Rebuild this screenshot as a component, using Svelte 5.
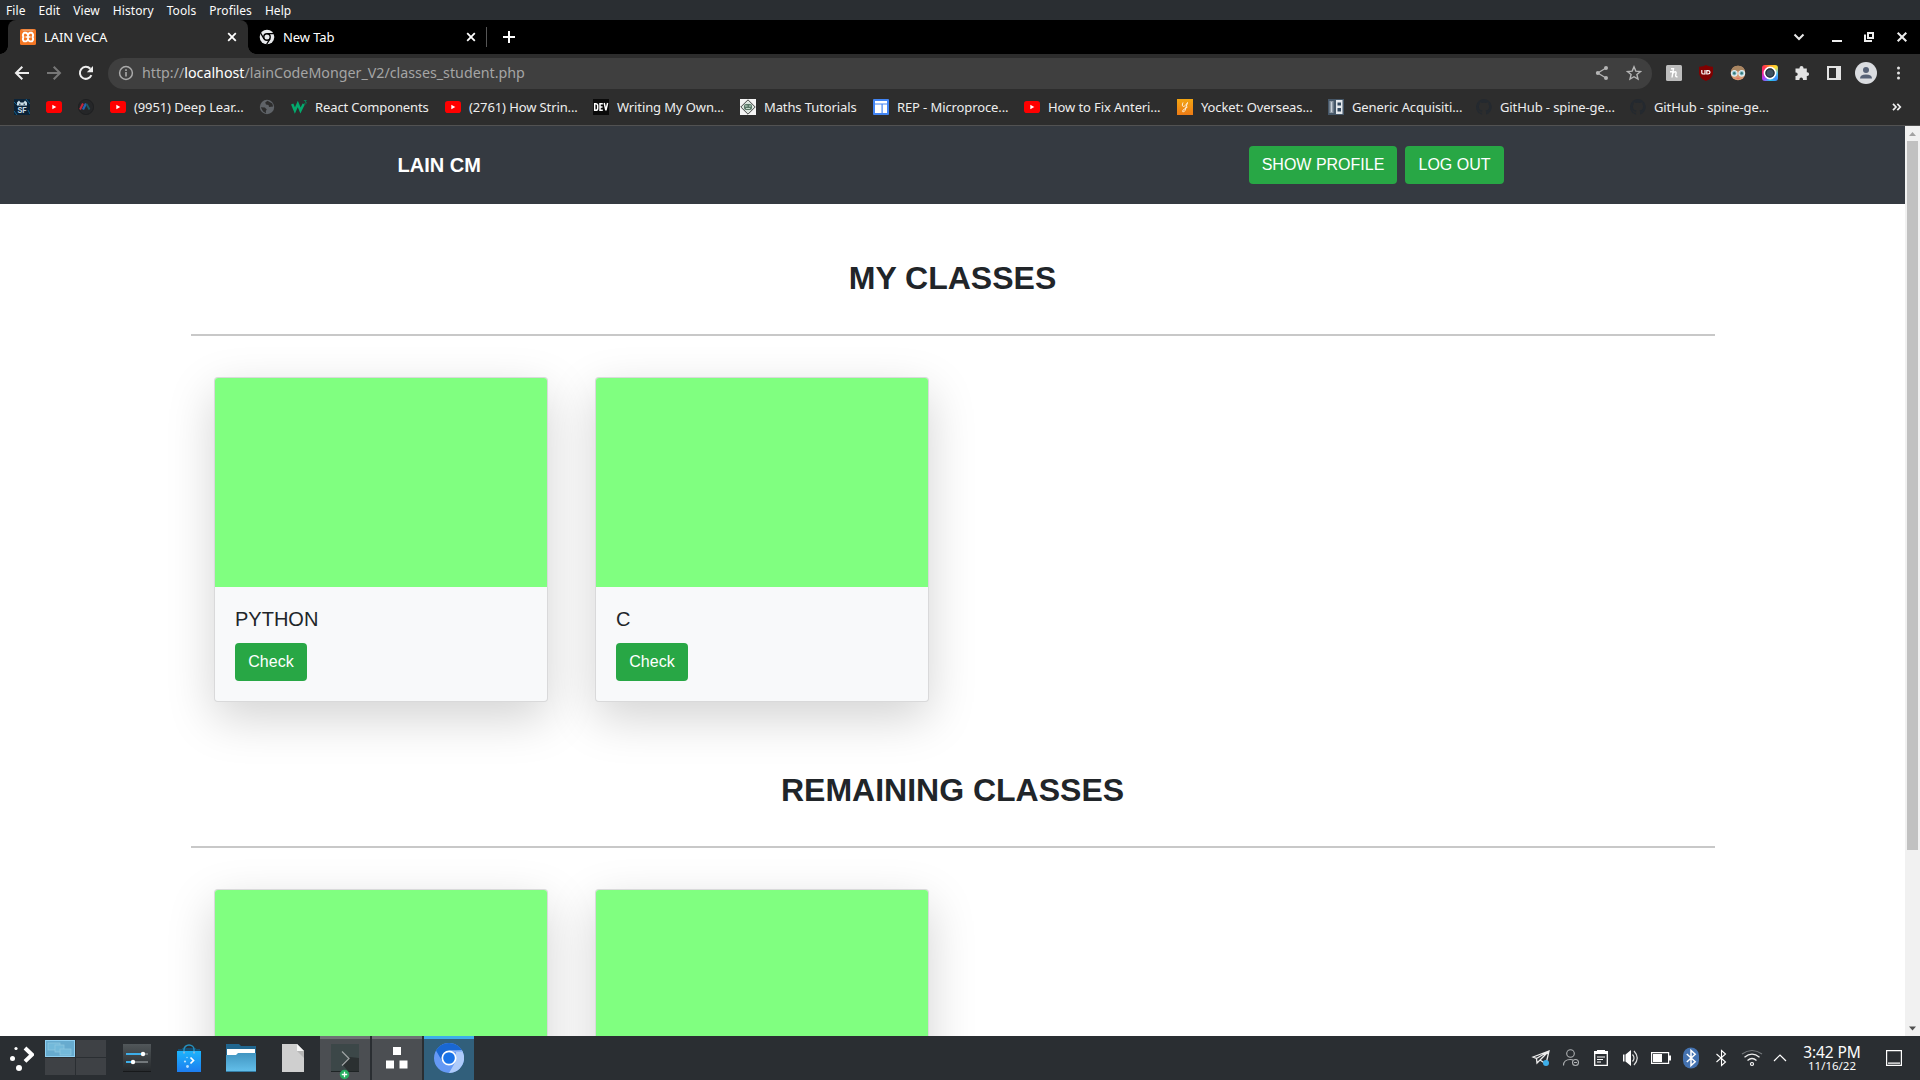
<script>
  const menus = ['File', 'Edit', 'View', 'History', 'Tools', 'Profiles', 'Help'];

  const bookmarks = [
    { icon: 'sf', text: '', width: 32 },
    { icon: 'youtube', text: '', width: 32 },
    { icon: 'stripes', text: '', width: 32 },
    { icon: 'youtube', text: '(9951) Deep Lear...', width: 149 },
    { icon: 'globe', text: '', width: 32 },
    { icon: 'w3', text: 'React Components', width: 154 },
    { icon: 'youtube', text: '(2761) How Strin...', width: 148 },
    { icon: 'dev', text: 'Writing My Own...', width: 147 },
    { icon: 'maths', text: 'Maths Tutorials', width: 133 },
    { icon: 'rep', text: 'REP - Microproce...', width: 151 },
    { icon: 'youtube', text: 'How to Fix Anteri...', width: 153 },
    { icon: 'yocket', text: 'Yocket: Overseas...', width: 151 },
    { icon: 'generic', text: 'Generic Acquisiti...', width: 148 },
    { icon: 'github', text: 'GitHub - spine-ge...', width: 154 },
    { icon: 'github', text: 'GitHub - spine-ge...', width: 154 }
  ];

  // Cards without a name show only their cover.
  const sections = [
    { title: 'MY CLASSES', cards: ['PYTHON', 'C'] },
    { title: 'REMAINING CLASSES', cards: ['', ''] }
  ];
</script>

{#snippet favicon(name)}
  <svg class="fav" viewBox="0 0 16 16" width="16" height="16">
    {#if name === 'sf'}
      <rect width="16" height="16" fill="#0b2338" />
      <path d="M0 3l3 3M12 0l4 5M0 12l3 4M14 11l2 4" stroke="#16608a" stroke-width="1" />
      <path d="M3 6.500V3.500L5 1.500l1.500 2h3l1.500-2 2 2v3z" fill="#c9dce6" />
      <path d="M5 5.200h1.500M9.500 5.200H11" stroke="#0b2338" />
      <text x="8" y="14" text-anchor="middle" font-family="Inter" font-weight="700" font-size="7.500" fill="#c9dce6">SF</text>
    {:else if name === 'youtube'}
      <rect y="2" width="16" height="12" rx="2.800" fill="#f00" />
      <path d="M6.300 5.700v4.600l4-2.300z" fill="#fff" />
    {:else if name === 'stripes'}
      <circle cx="8" cy="8" r="7.600" fill="#252628" stroke="#1f2022" />
      <path d="M2 10.500L5 4.500" stroke="#c6283a" stroke-width="2" />
      <path d="M5 10.500L8 4.500" stroke="#2464b4" stroke-width="2.200" />
      <path d="M8.500 5l3 5.500" stroke="#1c5b67" stroke-width="1.800" />
    {:else if name === 'globe'}
      <circle cx="8" cy="8" r="7.200" fill="#5f6368" />
      <path d="M8.500 1.800L6.200 3.500 7 5.500l2.500.6.600 2 4-.5-.8-3.200zM1.800 8.300l4 .2 2 2-1 1.500.3 2.200-3-1.700z" fill="#2d2d2d" />
    {:else if name === 'w3'}
      <path d="M1.200 5l2.700 6.500L6.800 5l2.700 6.500L12.700 5" fill="none" stroke="#04aa6d" stroke-width="2.500" />
      <path d="M12.800 1.500h2.500l-1.300 1.500q1.700 0 1.400 1.200-.6 1.200-2.500.5" fill="none" stroke="#07865a" stroke-width=".9" />
    {:else if name === 'dev'}
      <rect width="16" height="16" fill="#0a0a0a" />
      <g fill="none" stroke="#fff" stroke-width="1.500">
        <path d="M1.700 4.700v6.600h1q2 0 2-1.800v-3q0-1.800-2-1.800z" />
        <path d="M9.800 4.700H7v6.600h2.800M7 8h2.500" />
        <path d="M11.200 4l1.700 7.300L14.600 4" />
      </g>
    {:else if name === 'maths'}
      <rect width="16" height="16" fill="#f5f5f5" />
      <path d="M8 .8L15.200 8 8 15.200.8 8z" fill="#dce5df" stroke="#333" stroke-width=".9" />
      <rect x="4" y="5" width="8" height="6" rx="2" fill="#5b7869" />
      <path d="M5 7h2.500M9 7h2M6 9.500h4" stroke="#c5dacb" />
    {:else if name === 'rep'}
      <rect width="16" height="16" rx="1" fill="#4285f4" />
      <path d="M2 2h12v2.400H2zM2 5.600h6.500V14H2zM9.700 5.600H14V14H9.700z" fill="#fff" />
    {:else if name === 'yocket'}
      <defs><linearGradient id="yk" x2="0" y2="1"><stop stop-color="#f3a512" /><stop offset="1" stop-color="#ed7b15" /></linearGradient></defs>
      <rect width="16" height="16" fill="url(#yk)" />
      <path d="M6 3.500C4 8 7 9.500 10.500 3.500L8 11.500Q6 14.500 5.500 12q1-2 5-4" fill="none" stroke="#fff2dc" stroke-width="1" />
    {:else if name === 'generic'}
      <rect width="16" height="16" fill="#465768" />
      <path d="M1.500 2h4v12h-4z" fill="#8f9aa5" />
      <path d="M8 1h6.500v14H8z" fill="#e4e8ec" />
      <path d="M9.500 3.500h3.500v3H9.500zM9.500 9h3.500v3.500H9.500z" fill="#34495e" />
      <path d="M3.500 3v10" stroke="#c9d1d9" />
    {:else if name === 'github'}
      <path fill="#24292f" d="M8 0a8 8 0 00-2.530 15.590c.4.070.55-.17.550-.38v-1.490c-2.230.49-2.690-1.070-2.690-1.070-.36-.93-.89-1.170-.89-1.170-.73-.5.050-.49.050-.49.810.06 1.230.83 1.230.83.72 1.230 1.880.88 2.340.67.070-.52.280-.88.510-1.080-1.780-.2-3.640-.89-3.640-3.950 0-.87.310-1.590.82-2.150-.08-.2-.36-1.020.08-2.120 0 0 .67-.21 2.200.82a7.700 7.700 0 014 0c1.530-1.040 2.200-.82 2.200-.82.44 1.100.16 1.920.08 2.120.51.56.82 1.270.82 2.150 0 3.070-1.870 3.750-3.650 3.950.29.250.54.73.54 1.480v2.200c0 .21.150.46.550.38A8 8 0 008 0z" />
    {:else if name === 'xampp'}
      <rect width="16" height="16" rx="1.500" fill="#f37623" />
      <path d="M2.500 1.200h11" stroke="#d9d3c8" stroke-width=".6" />
      <g fill="none" stroke="#fff" stroke-width="1.900" stroke-linejoin="round">
        <path d="M4 3.800h2Q7 4 8 5.800 9 4 10 3.800h2q2 2 .5 4.200 1.500 2.500-.5 4.400h-2Q8.500 12 8 10.300 7.500 12 6 12.400H4Q2 10.500 3.500 8 2 5.800 4 3.800z" />
      </g>
      <path d="M5.500 8h5M8 6v4" stroke="#fff" stroke-width="1.500" />
    {:else if name === 'chrome'}
      <circle cx="8" cy="8" r="7.300" fill="#e8eaed" />
      <circle cx="8" cy="8" r="3.200" fill="#e8eaed" stroke="#000" stroke-width="1.400" />
      <path d="M8 4.600h7M5 9.800L1.600 4M11 9.800L7.500 15.500" stroke="#000" stroke-width="1.300" />
    {/if}
  </svg>
{/snippet}

<div class="desktop">
  <nav class="menubar">
    {#each menus as m}<span>{m}</span>{/each}
  </nav>

  <div class="tabs">
    <div class="tab active">
      {@render favicon('xampp')}
      <span class="tab-title">LAIN VeCA</span>
      <svg width="16" height="16" viewBox="0 0 16 16"><path d="M4.200 4.200l7.600 7.600M11.800 4.200l-7.600 7.600" stroke="#fff" stroke-width="1.800" /></svg>
    </div>
    <div class="tab idle">
      {@render favicon('chrome')}
      <span class="tab-title">New Tab</span>
      <svg width="16" height="16" viewBox="0 0 16 16"><path d="M4.200 4.200l7.600 7.600M11.800 4.200l-7.600 7.600" stroke="#fff" stroke-width="1.800" /></svg>
    </div>
    <i class="tab-sep"></i>
    <svg class="plus" width="14" height="14" viewBox="0 0 14 14"><path d="M7 1v12M1 7h12" stroke="#fff" stroke-width="2" /></svg>
    <div class="win">
      <svg width="16" height="16" viewBox="0 0 16 16"><path d="M3.500 5.500L8 10l4.500-4.500" fill="none" stroke="#e8e8e8" stroke-width="2" /></svg>
      <svg width="16" height="16" viewBox="0 0 16 16"><path d="M3 12h10" stroke="#eee" stroke-width="2" /></svg>
      <svg width="16" height="16" viewBox="0 0 16 16"><path d="M7 4h5v5H7zM4 5.500V12h7" fill="none" stroke="#eee" stroke-width="2" /></svg>
      <svg width="16" height="16" viewBox="0 0 16 16"><path d="M3.700 3.700l8.600 8.600M12.300 3.700l-8.600 8.600" stroke="#eee" stroke-width="2" /></svg>
    </div>
  </div>

  <div class="toolbar">
    <div class="navs">
      <svg width="16" height="16" viewBox="0 0 16 16"><path d="M15 8H2.500M8.300 1.700L2 8l6.300 6.300" fill="none" stroke="#eee" stroke-width="2" /></svg>
      <svg width="16" height="16" viewBox="0 0 16 16"><path d="M1 8h12.500M7.700 1.700L14 8l-6.300 6.300" fill="none" stroke="#777" stroke-width="2" /></svg>
      <svg width="16" height="16" viewBox="0 0 16 16"><path d="M13.400 10.200A6 6 0 1112.300 3.800" fill="none" stroke="#eee" stroke-width="2" /><path d="M15 1v6.200H8.800z" fill="#eee" /></svg>
    </div>
    <div class="omnibox">
      <svg width="16" height="16" viewBox="0 0 16 16"><circle cx="8" cy="8" r="6.400" fill="none" stroke="#aaa" stroke-width="1.500" /><path d="M8 7v4.500M8 4.300v1.700" stroke="#aaa" stroke-width="1.600" /></svg>
      <span class="url">http://<b>localhost</b>/lainCodeMonger_V2/classes_student.php</span>
      <svg width="16" height="16" viewBox="0 0 16 16"><path d="M12 3L3.800 8l8.200 5" fill="none" stroke="#b5b5b5" stroke-width="1.300" /><g fill="#b5b5b5"><circle cx="12" cy="3" r="2" /><circle cx="3.800" cy="8" r="2" /><circle cx="12" cy="13" r="2" /></g></svg>
      <svg width="16" height="16" viewBox="0 0 16 16"><path d="M8 1.800l1.800 4.300 4.700.4-3.600 3 1.100 4.600L8 11.700l-4 2.400 1.100-4.600-3.600-3 4.700-.4z" fill="none" stroke="#b5b5b5" stroke-width="1.400" /></svg>
    </div>
    <div class="exts">
      <svg width="16" height="16" viewBox="0 0 16 16"><rect width="16" height="16" rx="1.500" fill="#bdbdbd" /><path d="M5 3.700h2.500L6 12.500M6.300 9.500q1-2.700 2.800-2.700 1.400 0 .8 2.200-.9 3.300 1.600 2.700M4 6.700h3" fill="none" stroke="#fff" stroke-width="1.400" /></svg>
      <svg width="16" height="16" viewBox="0 0 16 16"><path d="M8 0q3 2 7 1.800V8q0 5-7 8-7-3-7-8V1.800Q5 2 8 0z" fill="#800000" /><path d="M3.800 5v2.700q0 1.300 1.500 1.300H7V5M8.800 5.600h1.200q2 0 2 1.700t-2 1.700H8.800z" fill="none" stroke="#fff" stroke-width="1.200" /></svg>
      <svg width="16" height="16" viewBox="0 0 16 16"><circle cx="8" cy="8" r="7.300" fill="#d99a72" /><path d="M1 6Q2.500.8 8 .8T15 6Z" fill="#a98662" /><circle cx="4.300" cy="8.300" r="2.800" fill="#8fc0cc" stroke="#e4eef0" stroke-width="1.200" /><circle cx="11.700" cy="8.300" r="2.800" fill="#8fc0cc" stroke="#e4eef0" stroke-width="1.200" /><circle cx="4.300" cy="8.300" r="1.200" fill="#377" /><circle cx="11.700" cy="8.300" r="1.200" fill="#377" /><path d="M6.500 13.300h3" stroke="#e46565" /></svg>
      <div class="camera"><svg width="16" height="16" viewBox="0 0 16 16"><circle cx="8" cy="8" r="5.500" fill="#3e5261" stroke="#fff" stroke-width="1.800" /><circle cx="8" cy="8" r="4" fill="none" stroke="#29333b" stroke-width="1.300" /></svg></div>
      <svg width="16" height="16" viewBox="0 0 16 16"><path d="M1.500 3.500h4V3a2 2 0 014 0v.5h3.300v3.700h.4a1.900 1.900 0 010 3.800h-.4v4H9v-.6a1.800 1.800 0 00-3.600 0v.6H1.500v-4H2a1.700 1.700 0 000-3.400h-.5z" fill="#e3e3e3" /></svg>
      <svg width="16" height="16" viewBox="0 0 16 16"><path d="M1 1h14v14H1zM3 3v10h7V3z" fill="#e3e3e3" fill-rule="evenodd" /></svg>
      <svg class="avatar" width="22" height="22" viewBox="0 0 22 22"><circle cx="11" cy="11" r="11" fill="#dadce0" /><circle cx="11" cy="8" r="3" fill="#566176" /><path d="M5 16.500q0-4 6-4t6 4z" fill="#566176" /></svg>
      <svg width="16" height="16" viewBox="0 0 16 16" fill="#e3e3e3"><circle cx="8.500" cy="3" r="1.500" /><circle cx="8.500" cy="8" r="1.500" /><circle cx="8.500" cy="13" r="1.500" /></svg>
    </div>
  </div>

  <div class="bookmarks">
    {#each bookmarks as b}
      <div class="bookmark" style:width="{b.width}px">
        {@render favicon(b.icon)}
        {#if b.text}<span>{b.text}</span>{/if}
      </div>
    {/each}
    <svg class="more" width="10" height="8" viewBox="0 0 10 8"><path d="M1 .8L4 4 1 7.200M5.300.8l3 3.200-3 3.200" fill="none" stroke="#eee" stroke-width="1.700" /></svg>
  </div>

  <div class="viewport">
    <main class="page">
      <header class="navbar">
        <strong>LAIN CM</strong>
        <div class="actions">
          <button class="btn profile">SHOW PROFILE</button>
          <button class="btn logout">LOG OUT</button>
        </div>
      </header>
      {#each sections as s}
        <section>
          <h2>{s.title}</h2>
          <hr />
          <div class="cards">
            {#each s.cards as c}
              <article class="card">
                <div class="cover"></div>
                {#if c}
                  <div class="card-body">
                    <h5>{c}</h5>
                    <button class="btn check">Check</button>
                  </div>
                {/if}
              </article>
            {/each}
          </div>
        </section>
      {/each}
    </main>
    <aside class="scrollbar">
      <svg width="15" height="15" viewBox="0 0 15 15"><path d="M4 10h7L7.500 6z" fill="#a3a3a3" /></svg>
      <div class="thumb"></div>
      <svg width="15" height="15" viewBox="0 0 15 15"><path d="M4 5.500h7l-3.500 4z" fill="#505050" /></svg>
    </aside>
  </div>

  <footer class="taskbar">
    <svg class="launcher" width="24" height="26" viewBox="0 0 24 26"><circle cx="6" cy="3.500" r="1.600" fill="#fff" /><circle cx="2.500" cy="13.500" r="2.500" fill="#fff" /><circle cx="9" cy="23" r="3" fill="#fff" /><path d="M15 3l7 6.700-7 6.700" fill="none" stroke="#fff" stroke-width="4" /></svg>
    <div class="pager">
      <i class="desk current"><svg width="28" height="15" viewBox="0 0 28 15"><g fill="#73b9da" stroke="#91c8e0" stroke-width=".7"><rect x="2" y="2" width="12" height="7" /><rect x="9" y="4" width="9" height="7" /><rect x="14" y="8" width="11" height="6" /></g></svg></i>
      <i class="desk"></i><i class="desk"></i><i class="desk"></i>
    </div>
    <div class="launchers">
      <svg width="30" height="28" viewBox="0 0 30 28">
        <defs><linearGradient id="st" x2="0" y2="1"><stop stop-color="#51575a" /><stop offset="1" stop-color="#25282b" /></linearGradient></defs>
        <rect x="1" width="28" height="28" fill="url(#st)" /><path d="M1 27.500h28" stroke="#17191b" />
        <path d="M4 10h17M4 18h7" stroke="#3daee9" stroke-width="1.800" /><path d="M22 10h4M12 18h14" stroke="#73787b" stroke-width="1.800" />
        <circle cx="21" cy="10" r="2.200" fill="#fff" /><circle cx="11" cy="18" r="2.200" fill="#fff" />
      </svg>
      <svg width="30" height="28" viewBox="0 0 30 28">
        <defs><linearGradient id="bag" x2="0" y2="1"><stop stop-color="#1cb4fb" /><stop offset="1" stop-color="#1d7df0" /></linearGradient></defs>
        <path d="M4 7V5h4V4h14v1h4v2z" fill="#164d70" /><path d="M10 9V5.500a5 4.500 0 0110 0V9" fill="none" stroke="#2590bf" stroke-width="1.500" />
        <path d="M3 7h24v21H3z" fill="url(#bag)" /><path d="M9 7.500h2v2H9zM19 7.500h2v2h-2z" fill="#7fb6dd" /><circle cx="13" cy="13.500" r=".7" fill="#b9e2ff" /><circle cx="11" cy="17.500" r="1.100" fill="#b9e2ff" /><circle cx="13.500" cy="22.500" r="1.400" fill="#b9e2ff" /><path d="M16.500 13.500l3 3-3 3" fill="none" stroke="#fff" stroke-width="1.700" />
      </svg>
      <svg width="30" height="28" viewBox="0 0 30 28">
        <defs><linearGradient id="fd" x2="0" y2="1"><stop stop-color="#4195c1" /><stop offset="1" stop-color="#64c0eb" /></linearGradient></defs>
        <path d="M0 0h13l2 2h15v13H0z" fill="#21668f" /><path d="M1 5h28v7H1z" fill="#fff" /><path d="M0 11h10l2-2h18v19H0z" fill="url(#fd)" /><path d="M0 27.500h30" stroke="#357fa8" />
      </svg>
      <svg width="30" height="28" viewBox="0 0 30 28"><path d="M4 0h15l7 7v21H4z" fill="#cfcfcf" /><path d="M19 7l7 7V7z" fill="#b6b6b6" /><path d="M19 0l7 7h-7z" fill="#f7f7f7" /></svg>
    </div>
    <div class="tasks">
      <div class="task">
        <svg width="30" height="38" viewBox="0 0 30 38"><rect x="1" y="2" width="28" height="28" fill="#3c4748" /><path d="M12 22l7 8h10V16l-9-1z" fill="#2b3031" /><path d="M12 9.500l7 7-7 7" fill="none" stroke="#a1a5a6" stroke-width="1.200" /><path d="M1 29.500h28" stroke="#1e2425" /><circle cx="14.500" cy="32.500" r="4.700" fill="#27ae60" /><path d="M14.500 29.800v5.400M11.800 32.500h5.400" stroke="#fff" stroke-width="1.300" /></svg>
      </div>
      <div class="task">
        <svg width="30" height="38" viewBox="0 0 30 38"><path d="M11 5h8v8h-8zM4 18.500h8v8H4zM17.500 18.500h8v8h-8z" fill="#fff" /></svg>
      </div>
      <div class="task focused">
        <svg width="30" height="38" viewBox="0 0 30 38"><circle cx="15" cy="16" r="15" fill="#6599f5" /><path d="M2 8.500A15 15 0 0128 8.500H15L8.500 19.800z" fill="#1967d2" /><path d="M28 8.500A15 15 0 0115 31l6.500-11.300L22 9z" fill="#aecbfa" /><path d="M15 8.500h13l.7 1.500H20z" fill="#8db5f8" /><circle cx="15" cy="16" r="6.700" fill="#1a73e8" stroke="#fff" stroke-width="1.700" /></svg>
      </div>
    </div>
    <div class="tray">
      <svg width="20" height="22" viewBox="0 0 20 22"><path d="M2 10L18 4l-3 13-6-4-3 3-.5-4.500zM5.500 11.500L18 4 9 13" fill="none" stroke="#eee" stroke-width="1.300" /><circle cx="15" cy="16" r="3" fill="#3daee9" /></svg>
      <svg width="20" height="22" viewBox="0 0 20 22"><g fill="none" stroke="#aeb1b3" stroke-width="1.100"><circle cx="9.500" cy="6.500" r="3.800" /><path d="M2.500 18.500q0-6 7-6 1.500 0 2.500.5" /><circle cx="14.500" cy="15.500" r="3" /><path d="M13 15.500h3" /></g></svg>
      <svg width="20" height="22" viewBox="0 0 20 22"><path d="M3.700 4.700h12.600v13.600H3.700z" fill="none" stroke="#fff" stroke-width="1.300" /><path d="M6 3h8v4H6zM3 4h14v3H3z" fill="#fff" /><path d="M6 10h8M6 12.500h6M6 15h4" stroke="#fff" stroke-width="1.200" /></svg>
      <svg width="20" height="22" viewBox="0 0 20 22"><path d="M2 7.500h1.500v7H2zM4.500 7.500L10 3v16l-5.500-4.500z" fill="#fff" /><path d="M11.500 7.500q3 3.500 0 7M13 4q6.500 7 0 14" fill="none" stroke="#ddd" stroke-width="1.200" /></svg>
      <svg width="20" height="22" viewBox="0 0 20 22"><path d="M.6 5.600h17v10.800H.6z" fill="none" stroke="#fff" stroke-width="1.200" /><path d="M2 7h9v8H2zM17.500 8.500H20v5h-2.500z" fill="#fff" /></svg>
      <svg width="20" height="22" viewBox="0 0 20 22"><rect x="2" y=".5" width="16" height="21" rx="8" fill="#4472b0" /><path d="M5.800 7l8.400 7.800L10 18.500V3.500l4.200 3.700L5.800 15" fill="none" stroke="#fff" stroke-width="1.500" /></svg>
      <svg width="20" height="22" viewBox="0 0 20 22"><path d="M5.500 7l9 8-4 3.500v-15l4 3.500-9 8" fill="none" stroke="#fff" stroke-width="1.100" /></svg>
      <svg width="22" height="22" viewBox="0 0 22 22"><path d="M1 7q10-7 20 0" fill="none" stroke="#74787b" stroke-width="1.200" /><path d="M3.500 10.200q7.500-6 15 0M6.500 13.500q4.500-4 9 0" fill="none" stroke="#eee" stroke-width="1.300" /><circle cx="11" cy="17" r="1.500" fill="none" stroke="#fff" stroke-width="1.200" /></svg>
      <svg class="expand" width="20" height="22" viewBox="0 0 20 22"><path d="M4 14l6-6 6 6" fill="none" stroke="#fff" stroke-width="1.200" /></svg>
    </div>
    <div class="clock"><span>3:42 PM</span><small>11/16/22</small></div>
    <svg class="show" width="16" height="16" viewBox="0 0 16 16"><path d="M.6.600h14.800v14.800H.6zM2 13.200h12" fill="none" stroke="#fff" stroke-width="1.200" /></svg>
  </footer>
</div>

<style>
  :global(body) { margin: 0; background: #fff; overflow: hidden; }
  .desktop { width: 1920px; height: 1080px; display: flex; flex-direction: column; overflow: hidden; font-family: 'Noto Sans', sans-serif; color: #eee; }
  .desktop * { box-sizing: border-box; }
  svg { display: block; flex: none; }

  .menubar { height: 20px; flex: none; background: #2a2e32; display: flex; gap: 13px; padding-left: 6px; font-size: 12px; line-height: 21px; letter-spacing: .07px; color: #fcfcfc; }

  .tabs { height: 34px; flex: none; background: #000; display: flex; align-items: center; padding-left: 8px; font-size: 13px; letter-spacing: -.1px; color: #fff; }
  .tab { height: 34px; display: flex; align-items: center; }
  .tab-title { flex: 1; margin-left: 8px; }
  .active { position: relative; width: 240px; padding: 0 8px 0 12px; background: #2d2d2d; border-radius: 8px 8px 0 0; }
  .active::before, .active::after { content: ''; position: absolute; bottom: 0; width: 8px; height: 8px; }
  .active::before { left: -8px; background: radial-gradient(circle at 0 0, #000 7.500px, #2d2d2d 8px); }
  .active::after { right: -8px; background: radial-gradient(circle at 100% 0, #000 7.500px, #2d2d2d 8px); }
  .idle { width: 238px; padding: 0 7px 0 11px; }
  .tab-sep { width: 1px; height: 20px; background: #555; }
  .plus { margin-left: 15px; }
  .win { margin-left: auto; margin-right: 10px; display: flex; }
  .win svg + svg { margin-left: 16px; }
  .win svg:nth-child(2) { margin-left: 22px; }
  .win svg:nth-child(4) { margin-left: 17px; }

  .toolbar { height: 38px; flex: none; background: #2d2d2d; display: flex; align-items: center; padding: 0 14px; }
  .navs { display: flex; gap: 16px; }
  .omnibox { width: 1544px; height: 31px; margin-left: 14px; padding: 0 10px; background: #3f3f3f; border-radius: 16px; display: flex; align-items: center; gap: 16px; color: #a5a5a5; }
  .url { flex: 1; margin-left: -8px; padding-bottom: 1px; font-size: 14.250px; }
  .url b { font-weight: 400; color: #fff; }
  .exts { display: flex; align-items: center; gap: 16px; margin-left: 14px; }
  .avatar { margin: 0 -3px; }
  .camera { width: 16px; height: 16px; border-radius: 3px; background: conic-gradient(#ff9b21, #ffde30, #57c8ef, #3e8fff, #28c8e8, #a644ff, #f52392, #ff334b, #ff9b21); }

  .bookmarks { height: 34px; flex: none; background: #2d2d2d; border-bottom: 1px solid #525252; display: flex; align-items: center; padding: 0 18px 3px 14px; font-size: 13px; letter-spacing: -.11px; white-space: nowrap; color: #eee; }
  .bookmark { display: flex; align-items: center; gap: 8px; flex: none; }
  .more { margin-left: auto; }

  .viewport { height: 910px; flex: none; display: flex; overflow: hidden; background: #fff; font-family: 'Liberation Sans', sans-serif; color: #212529; }
  .page { width: 1905px; overflow: hidden; }
  .navbar { height: 78px; background: #353a41; display: flex; align-items: center; justify-content: space-between; padding: 0 401px 0 397.600px; }
  .navbar strong { font-size: 20px; color: #fff; }
  .actions { display: flex; gap: 8px; }
  .btn { height: 38px; padding: 0; border: 0; border-radius: 4px; background: #28a745; color: #fff; font: 16px/24px 'Liberation Sans', sans-serif; white-space: nowrap; }
  .profile { width: 148px; }
  .logout { width: 99px; }
  .check { width: 72px; }
  section { width: 1524px; margin: 0 auto; height: 512px; padding-top: 55px; }
  h2 { margin: 0; text-align: center; font-size: 32px; line-height: 38px; font-weight: 700; }
  hr { margin: 37px 0 41px; border: 0; height: 2px; background: #c8c8c8; }
  .cards { display: flex; margin-left: -.5px; }
  .card { width: 334px; height: 325px; margin: 0 23px 0 24px; border: 1px solid rgba(0, 0, 0, .125); border-radius: 4px; background: #f8f9fa; box-shadow: 0 16px 48px rgba(0, 0, 0, .175); display: flex; flex-direction: column; flex: none; }
  .cover { height: 209px; background: #80ff80; border-radius: 3px 3px 0 0; }
  .card-body { padding: 20px; }
  h5 { margin: 0 0 12px; font-size: 20px; line-height: 24px; font-weight: 400; }

  .scrollbar { width: 15px; background: #f1f1f1; display: flex; flex-direction: column; }
  .thumb { width: 11px; height: 709px; margin: 0 2px auto; background: #c1c1c1; }

  .taskbar { height: 44px; flex: none; background: #2a2e32; display: flex; align-items: center; padding: 0 18px 0 10px; }
  .pager { display: grid; grid-template-columns: 30px 30px; grid-template-rows: 17px 17px; gap: 1px; margin: 0 0 1px 11px; }
  .desk { background: #3e4145; }
  .current { background: #67abcf; border: 1px solid #8fd0f2; }
  .launchers { display: flex; gap: 22px; margin-left: 16px; }
  .tasks { display: flex; gap: 2px; margin-left: 12px; }
  .task { width: 50px; height: 44px; padding: 3px 10px; background: #4b4e52; border-top: 3px solid #6e7174; }
  .focused { background: #315f7b; border-color: #3daee9; }
  .tray { display: flex; gap: 10px; margin-left: auto; }
  .expand { margin-left: -3px; }
  .clock { width: 76px; margin-left: 4px; display: flex; flex-direction: column; align-items: center; color: #fcfcfc; }
  .clock span { font-size: 15.500px; line-height: 16px; letter-spacing: -.1px; white-space: nowrap; }
  .clock small { font-size: 11.500px; line-height: 12px; }
  .show { margin-left: 16px; }
</style>
